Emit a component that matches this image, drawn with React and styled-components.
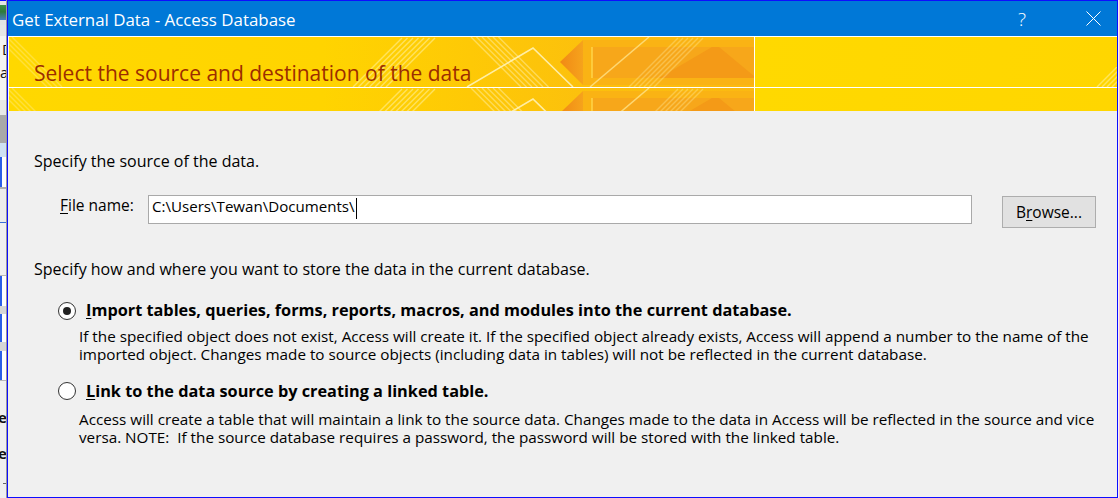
import React from "react";
import styled, { createGlobalStyle } from "styled-components";

const GlobalStyle = createGlobalStyle`
  html, body { margin: 0; padding: 0; }
  body {
    background: #f0f0f0;
    font-family: "Open Sans", "Noto Sans", sans-serif;
    color: #000;
  }
  #root { width: 1119px; height: 498px; overflow: hidden; }
`;

const Screen = styled.div`
  display: flex;
  width: 1119px;
  height: 498px;
  background: #f0f0f0;
  overflow: hidden;
`;

/* sliver of the window behind the dialog */
const Backdrop = styled.div`
  flex: none;
  width: 7px;
  box-sizing: border-box;
  border-right: 1px solid #9a9a9a;
  display: flex;
  flex-direction: column;
  overflow: hidden;
`;

const Segment = styled.div`
  flex: none;
  height: ${(p) => p.$h}px;
  background: ${(p) => p.$bg || "#f0f0f0"};
  box-sizing: border-box;
  border-left: ${(p) => (p.$edge ? "2px solid #2a5fe6" : "0")};
  overflow: hidden;
  display: flex;
  flex-direction: column;
`;

const PeekGlyph = styled.span`
  display: block;
  margin-top: ${(p) => p.$mt}px;
  margin-left: ${(p) => (p.$ml == null ? 1 : p.$ml)}px;
  font-family: "Open Sans", sans-serif;
  font-weight: ${(p) => (p.$bold ? 700 : 400)};
  font-size: 15px;
  line-height: 16px;
  color: #111;
  white-space: nowrap;
`;

const PeekIcon = styled.span`
  display: block;
  width: 6px;
  height: 15px;
  margin-top: 4px;
  background: linear-gradient(180deg, #3f8f47 0%, #2f7a3a 45%, #4a7fc0 100%);
`;

const PeekDash = styled.span`
  display: block;
  width: 3px;
  height: 1px;
  margin: ${(p) => p.$mt}px 0 0 3px;
  background: #666;
`;

const Dialog = styled.div`
  flex: none;
  width: 1111px;
  height: 498px;
  box-sizing: border-box;
  border: 1px solid #0d0dff;
  display: flex;
  flex-direction: column;
  background: #f0f0f0;
`;

const EdgeGap = styled.div`
  flex: none;
  width: 1px;
  background: #f4f4f4;
`;

const TitleBar = styled.div`
  flex: none;
  height: 35px;
  background: #0078d7;
  display: flex;
  align-items: center;
  padding-left: 4px;
  color: #fff;
`;

const TitleText = styled.div`
  flex: 1;
  font-size: 16.9px;
  line-height: 20px;
  padding-top: 2px;
  white-space: nowrap;
`;

const CaptionButton = styled.div`
  flex: none;
  width: 48px;
  height: 35px;
  display: flex;
  align-items: center;
  justify-content: center;
  margin-right: ${(p) => p.$mr || 0}px;
  font-size: 19px;
  font-weight: 300;
  color: #fff;
`;

const Banner = styled.div`
  flex: none;
  display: flex;
  flex-direction: column;
  gap: 1px;
  padding: 1px 0 0 1px;
  background: #ffffff;
`;

const BannerRow = styled.div`
  display: flex;
  gap: 1px;
  height: ${(p) => p.$h}px;
`;

const BannerArt = styled.div`
  position: relative;
  flex: none;
  width: 745px;
  overflow: hidden;
  background: linear-gradient(
    90deg,
    #ffd800 0%,
    #ffd400 42%,
    #fec906 62%,
    #fcc00d 78%,
    #fbb912 100%
  );
`;

const BannerPlain = styled.div`
  position: relative;
  flex: 1;
  overflow: hidden;
  background: linear-gradient(100deg, #ffd900 0%, #ffd600 100%);
`;

const ArtLayer = styled.svg`
  position: absolute;
  left: 0;
  top: 0;
`;

const CornerLayer = styled.svg`
  position: absolute;
  right: 0;
  bottom: 0;
`;

const BannerTitle = styled.div`
  position: relative;
  padding: 23px 0 0 25px;
  font-size: 21px;
  line-height: 26px;
  color: #9c2d00;
  white-space: nowrap;
`;

const Body = styled.div`
  flex: 1;
  display: flex;
  flex-direction: column;
  padding: 0 21px 0 26px;
`;

const SectionText = styled.div`
  margin-top: ${(p) => p.$mt}px;
  font-size: 16px;
  line-height: 20px;
  white-space: nowrap;
`;

const FileRow = styled.div`
  margin-top: 24px;
  display: flex;
  align-items: flex-start;
  padding-left: 26px;
`;

const FieldLabel = styled.div`
  flex: none;
  width: 88px;
  font-size: 15.5px;
  line-height: 20px;
  white-space: nowrap;
`;

const TextField = styled.div`
  flex: none;
  width: 824px;
  height: 29px;
  box-sizing: border-box;
  border: 1px solid #a9a9a9;
  background: #fff;
  padding: 0 3px;
  font-size: 15.1px;
  line-height: 20px;
  white-space: nowrap;
  display: flex;
  align-items: flex-start;
`;

const Caret = styled.span`
  display: inline-block;
  width: 1px;
  height: 21px;
  margin-top: 2px;
  margin-left: 1px;
  background: #000;
`;

const Button = styled.div`
  flex: none;
  margin: 1px 0 0 30px;
  width: 94px;
  height: 32px;
  box-sizing: border-box;
  border: 1px solid #adadad;
  background: #e1e1e1;
  display: flex;
  align-items: center;
  justify-content: center;
  font-size: 15.5px;
  line-height: 20px;
`;

const Key = styled.span`
  text-decoration: underline;
  text-underline-offset: 2px;
  text-decoration-thickness: 1px;
`;

const RadioRow = styled.div`
  margin-top: ${(p) => p.$mt}px;
  margin-left: 24px;
  display: flex;
  align-items: center;
`;

const Radio = styled.span`
  flex: none;
  width: 18px;
  height: 18px;
  box-sizing: border-box;
  border-radius: 50%;
  border: 1px solid #333;
  background: #fff;
  display: flex;
  align-items: center;
  justify-content: center;
  margin-top: 1px;

  &::after {
    content: "";
    width: 8px;
    height: 8px;
    border-radius: 50%;
    background: ${(p) => (p.$checked ? "#222" : "transparent")};
  }
`;

const OptionLabel = styled.div`
  margin-left: 10px;
  font-size: 16.3px;
  font-weight: 700;
  line-height: 20px;
  white-space: nowrap;
`;

const OptionDesc = styled.div`
  margin-top: ${(p) => p.$mt}px;
  margin-left: 45px;
  font-size: 15.25px;
  line-height: 18.3px;
  white-space: nowrap;
`;

function BannerDecoration({ height }) {
  const slashes = (x0, n, step, len, op) =>
    Array.from({ length: n }, (_, i) => (
      <line
        key={`s${x0}-${i}`}
        x1={x0 + i * step}
        y1={50}
        x2={x0 + i * step + len}
        y2={50 - len}
        stroke="#fff2a8"
        strokeOpacity={op}
        strokeWidth="1.4"
      />
    ));
  const backslashes = (x0, n, step, len, op) =>
    Array.from({ length: n }, (_, i) => (
      <line
        key={`b${x0}-${i}`}
        x1={x0 + i * step}
        y1={0}
        x2={x0 + i * step + len}
        y2={len}
        stroke="#fff2a8"
        strokeOpacity={op}
        strokeWidth="1.4"
      />
    ));
  return (
    <ArtLayer width="745" height={height} viewBox={`0 0 745 ${height}`}>
      <defs>
        <linearGradient id={`head${height}`} x1="0" x2="1" y1="0" y2="0">
          <stop offset="0" stopColor="#f18915" />
          <stop offset="1" stopColor="#f6a31c" />
        </linearGradient>
      </defs>
      {backslashes(-12, 4, 5, 50, 0.35)}
      {slashes(344, 7, 5.5, 49, 0.55)}
      {backslashes(462, 6, 5.5, 50, 0.5)}
      <rect x="574" y="3" width="171" height="45" fill="#fab314" />
      <rect x="583" y="10" width="162" height="31" fill="#f7a71a" />
      <polygon points="650,41 703,10 710,10 745,39 745,41" fill="#f49a17" />
      {slashes(620, 6, 5, 49, 0.35)}
      <polygon points="551,25 574,3 574,48" fill={`url(#head${height})`} />
      <line x1="583" y1="10" x2="583" y2="41" stroke="#ffd449" strokeWidth="1.5" />
      <polyline
        points="458,50 524,11 564,50"
        fill="none"
        stroke="#fff4c0"
        strokeOpacity="0.85"
        strokeWidth="1.6"
      />
      <line x1="581" y1="50" x2="640" y2="0" stroke="#ffe48a" strokeOpacity="0.8" strokeWidth="1.5" />
    </ArtLayer>
  );
}

function CornerStripes() {
  return (
    <CornerLayer width="26" height="20" viewBox="0 0 26 20">
      {[0, 5, 10, 15].map((d) => (
        <line
          key={d}
          x1={6 + d}
          y1="20"
          x2={26 + d}
          y2="0"
          stroke="#fff2a8"
          strokeOpacity="0.55"
          strokeWidth="1.4"
        />
      ))}
    </CornerLayer>
  );
}

export default function App() {
  return (
    <>
      <GlobalStyle />
      <Screen>
        <Backdrop>
          <Segment $h={1} $bg="#0d0dff" />
          <Segment $h={24} $bg="#e4e4e4">
            <PeekIcon />
          </Segment>
          <Segment $h={11} $bg="#e6e6e6" />
          <Segment $h={64} $bg="#f4f4f4">
            <PeekGlyph $mt={5} $ml={2}>D</PeekGlyph>
            <PeekGlyph $mt={7} $ml={0}>a</PeekGlyph>
          </Segment>
          <Segment $h={15} $bg="#e8e8e8" />
          <Segment $h={28} $bg="#a9a9a9" />
          <Segment $h={14} $bg="#cfe2f4" />
          <Segment $h={30} $bg="#ffffff" $edge />
          <Segment $h={2} $bg="#b0b0b0" />
          <Segment $h={33} $bg="#ececec" />
          <Segment $h={1} $bg="#3b6fd6" />
          <Segment $h={52} $bg="#f0f0f0" />
          <Segment $h={1} $bg="#b8b8b8" />
          <Segment $h={30} $bg="#ffffff" $edge />
          <Segment $h={8} $bg="#d6d6d6" />
          <Segment $h={28} $bg="#ffffff" $edge />
          <Segment $h={9} $bg="#d6d6d6" />
          <Segment $h={29} $bg="#ffffff" $edge />
          <Segment $h={1} $bg="#b8b8b8" />
          <Segment $h={117} $bg="#f0f0f0">
            <PeekGlyph $mt={28} $ml={-2} $bold>e</PeekGlyph>
            <PeekGlyph $mt={20} $ml={-2} $bold>e</PeekGlyph>
            <PeekDash $mt={22} />
          </Segment>
        </Backdrop>

        <Dialog>
          <TitleBar>
            <TitleText>Get External Data - Access Database</TitleText>
            <CaptionButton $mr={23}>?</CaptionButton>
            <CaptionButton>
              <svg width="15" height="15" viewBox="0 0 15 15">
                <path d="M0.5 0.5 L14.5 14.5 M14.5 0.5 L0.5 14.5" stroke="#fff" strokeWidth="1" fill="none" />
              </svg>
            </CaptionButton>
          </TitleBar>

          <Banner>
            <BannerRow $h={50}>
              <BannerArt>
                <BannerDecoration height={50} />
                <BannerTitle>Select the source and destination of the data</BannerTitle>
              </BannerArt>
              <BannerPlain>
                <CornerStripes />
              </BannerPlain>
            </BannerRow>
            <BannerRow $h={23}>
              <BannerArt>
                <BannerDecoration height={23} />
              </BannerArt>
              <BannerPlain />
            </BannerRow>
          </Banner>

          <Body>
            <SectionText $mt={40}>Specify the source of the data.</SectionText>

            <FileRow>
              <FieldLabel>
                <Key>F</Key>ile name:
              </FieldLabel>
              <TextField>
                C:\Users\Tewan\Documents\
                <Caret />
              </TextField>
              <Button>
                B<Key>r</Key>owse...
              </Button>
            </FileRow>

            <SectionText $mt={31}>
              Specify how and where you want to store the data in the current database.
            </SectionText>

            <RadioRow $mt={21}>
              <Radio $checked />
              <OptionLabel>
                <Key>I</Key>mport tables, queries, forms, reports, macros, and modules into the current database.
              </OptionLabel>
            </RadioRow>
            <OptionDesc $mt={7}>
              If the specified object does not exist, Access will create it. If the specified object already exists, Access will append a number to the name of the
              <br />
              imported object. Changes made to source objects (including data in tables) will not be reflected in the current database.
            </OptionDesc>

            <RadioRow $mt={17}>
              <Radio />
              <OptionLabel>
                <Key>L</Key>ink to the data source by creating a linked table.
              </OptionLabel>
            </RadioRow>
            <OptionDesc $mt={9}>
              Access will create a table that will maintain a link to the source data. Changes made to the data in Access will be reflected in the source and vice
              <br />
              versa. NOTE:&nbsp; If the source database requires a password, the password will be stored with the linked table.
            </OptionDesc>
          </Body>
        </Dialog>
        <EdgeGap />
      </Screen>
    </>
  );
}
